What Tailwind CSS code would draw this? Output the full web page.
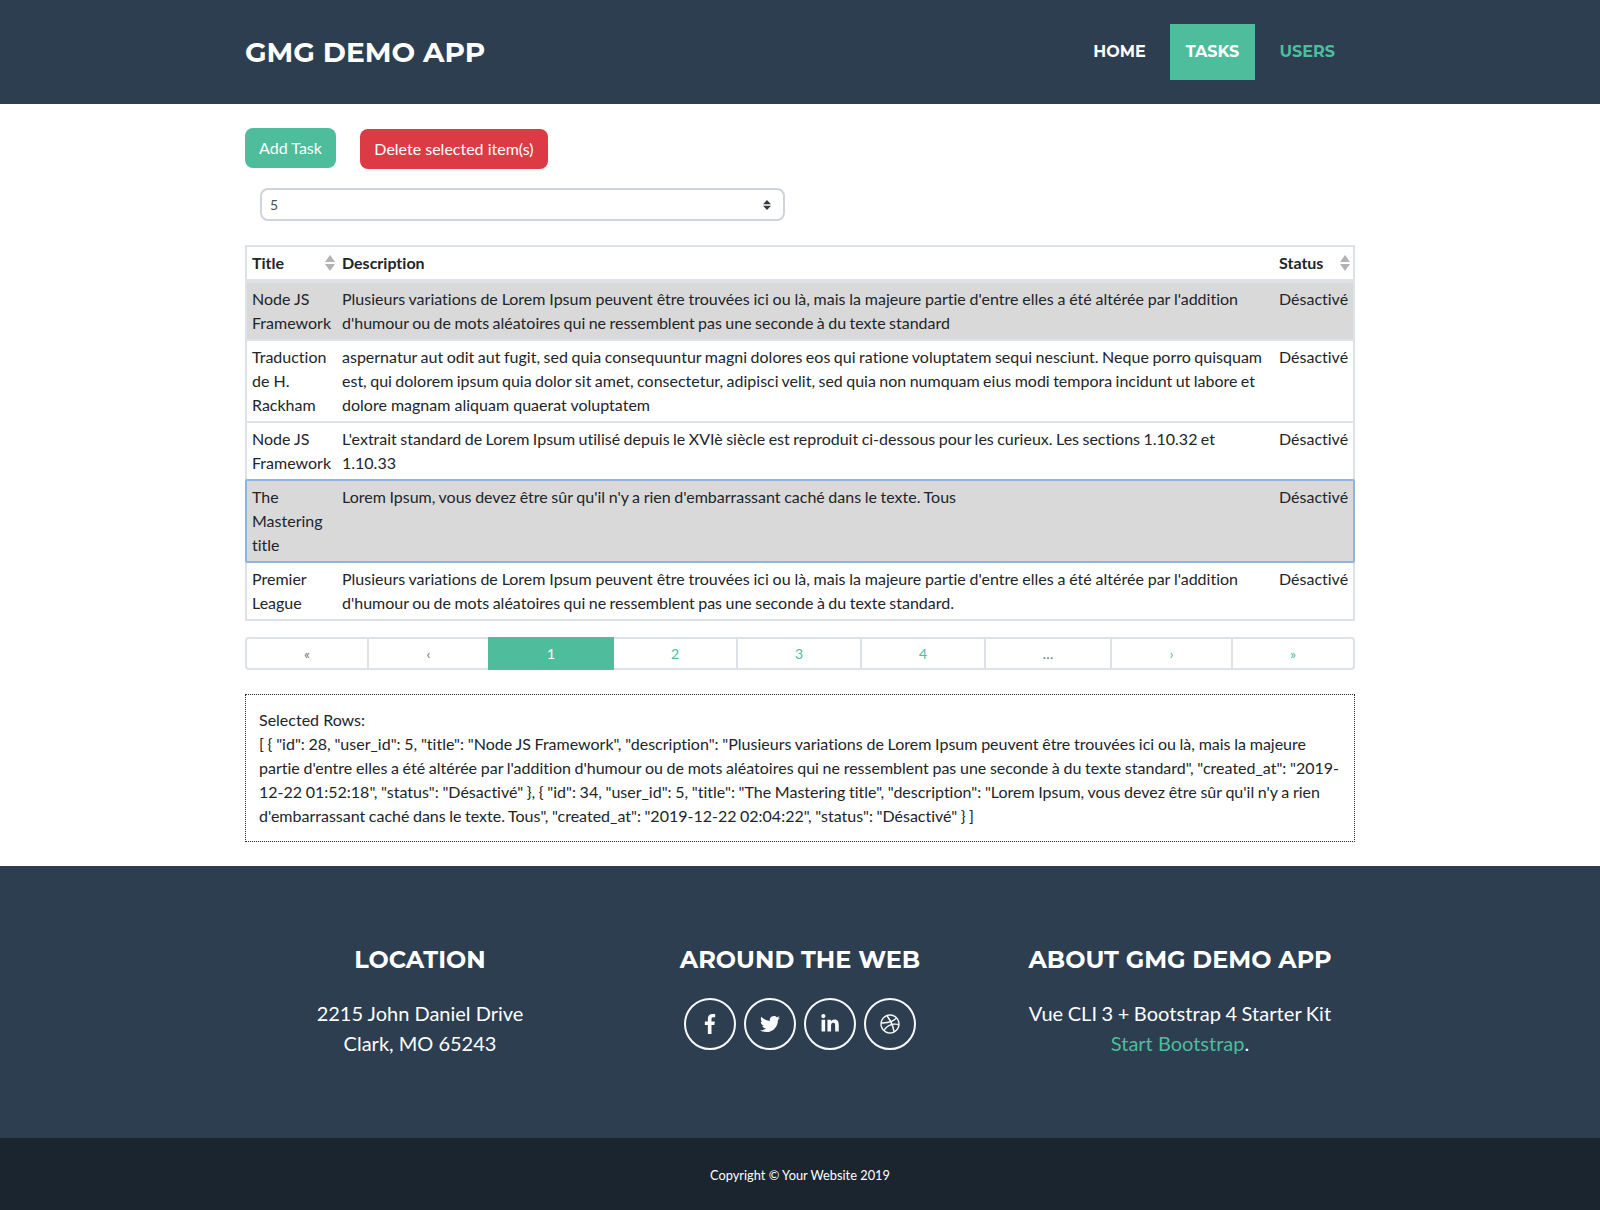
<!DOCTYPE html>
<html lang="fr">
<head>
<meta charset="utf-8">
<title>GMG Demo App</title>
<script src="https://cdn.jsdelivr.net/npm/@tailwindcss/browser@4"></script>
</head>
<body class="bg-white text-[#212529] text-base leading-6 font-[Lato,sans-serif] [font-variant-ligatures:none]">
<header class="h-[104px] bg-[#2c3e50]">
  <div class="w-[1110px] mx-auto h-full flex items-center justify-between text-white font-[Montserrat,Inter,sans-serif] font-bold">
    <a class="text-[28px] whitespace-nowrap">GMG DEMO APP</a>
    <nav class="flex items-center gap-2 text-base whitespace-nowrap">
      <a class="h-14 w-[85px] pb-1 pt-[3px] flex items-center justify-center">HOME</a>
      <a class="h-14 w-[85px] pb-1 pt-[3px] flex items-center justify-center bg-[#4dbd9c]">TASKS</a>
      <a class="h-14 w-[92px] pb-1 pt-[3px] pl-[16.500px] flex items-center text-[#4dbd9c]">USERS</a>
    </nav>
  </div>
</header>

<main class="w-[1110px] mx-auto h-[762px] pt-6">
  <div class="flex gap-6 text-white">
    <button class="w-[91px] h-10 rounded-lg bg-[#4dbd9c]">Add Task</button>
    <button class="w-[188px] h-10 mt-px rounded-lg bg-[#dc3a45]">Delete selected item(s)</button>
  </div>
  <div class="ml-[15px] mt-[19px] w-[525px] h-[33px] border-2 border-[#ced4da] rounded-lg flex items-center justify-between pl-2 pr-3 text-sm text-[#495057]">
    <span>5</span>
    <svg class="w-2 h-[10px]" viewBox="0 0 8 10"><path fill="#343a40" d="M4 0 0 4.200h8zM4 10 0 5.800h8z"/></svg>
  </div>

  <section class="mt-6 border-2 border-[#dee2e6]">
    <div class="h-9 border-b-4 border-[#dee2e6] grid grid-cols-[90px_937px_1fr] pl-[5px] pt-1 font-bold">
      <div class="flex justify-between pr-[7px]">Title<svg class="w-[10px] h-4 mt-1" viewBox="0 0 10 16"><path fill="#b2b2b2" d="M5 0 0 7h10zM5 16 0 9h10z"/></svg></div>
      <div>Description</div>
      <div class="flex justify-between pr-[3px]">Status<svg class="w-[10px] h-4 mt-1" viewBox="0 0 10 16"><path fill="#b2b2b2" d="M5 0 0 7h10zM5 16 0 9h10z"/></svg></div>
    </div>
    <div class="h-[58px] border-b-2 border-[#dee2e6] bg-[#d9d9d9] grid grid-cols-[90px_937px_1fr] pl-[5px] pt-1">
      <div>Node JS<br>Framework</div>
      <div class="whitespace-nowrap [word-spacing:-2px] [text-align-last:justify]">
        <p class="w-[896px]">Plusieurs variations de Lorem Ipsum peuvent être trouvées ici ou là, mais la majeure partie d'entre elles a été altérée par l'addition</p>
        <p class="w-[608px]">d'humour ou de mots aléatoires qui ne ressemblent pas une seconde à du texte standard</p>
      </div>
      <div>Désactivé</div>
    </div>
    <div class="h-[82px] border-b-2 border-[#dee2e6] grid grid-cols-[90px_937px_1fr] pl-[5px] pt-1">
      <div>Traduction<br>de H.<br>Rackham</div>
      <div class="whitespace-nowrap [word-spacing:-2px] [text-align-last:justify]">
        <p class="w-[920px]">aspernatur aut odit aut fugit, sed quia consequuntur magni dolores eos qui ratione voluptatem sequi nesciunt. Neque porro quisquam</p>
        <p class="w-[913px]">est, qui dolorem ipsum quia dolor sit amet, consectetur, adipisci velit, sed quia non numquam eius modi tempora incidunt ut labore et</p>
        <p class="w-[308px]">dolore magnam aliquam quaerat voluptatem</p>
      </div>
      <div>Désactivé</div>
    </div>
    <div class="h-14 grid grid-cols-[90px_937px_1fr] pl-[5px] pt-1">
      <div>Node JS<br>Framework</div>
      <div class="whitespace-nowrap">
        <p class="w-[873px] [word-spacing:-2px] [text-align-last:justify]">L'extrait standard de Lorem Ipsum utilisé depuis le XVIè siècle est reproduit ci-dessous pour les curieux. Les sections 1.10.32 et</p>
        <p>1.10.33</p>
      </div>
      <div>Désactivé</div>
    </div>
    <div class="h-[84px] -mx-0.5 relative border-2 border-[#8eb4e3] rounded-[2px] bg-[#d9d9d9] grid grid-cols-[90px_937px_1fr] pl-[5px] pt-1">
      <div>The<br>Mastering<br>title</div>
      <div class="whitespace-nowrap [word-spacing:-2px] [text-align-last:justify]">
        <p class="w-[614px]">Lorem Ipsum, vous devez être sûr qu'il n'y a rien d'embarrassant caché dans le texte. Tous</p>
      </div>
      <div>Désactivé</div>
    </div>
    <div class="h-14 grid grid-cols-[90px_937px_1fr] pl-[5px] pt-1">
      <div>Premier<br>League</div>
      <div class="whitespace-nowrap [word-spacing:-2px] [text-align-last:justify]">
        <p class="w-[896px]">Plusieurs variations de Lorem Ipsum peuvent être trouvées ici ou là, mais la majeure partie d'entre elles a été altérée par l'addition</p>
        <p class="w-[612px]">d'humour ou de mots aléatoires qui ne ressemblent pas une seconde à du texte standard.</p>
      </div>
      <div>Désactivé</div>
    </div>
  </section>

  <nav class="mt-4 h-[33px] flex text-sm text-center leading-[29px] text-[#4dbd9c]">
    <span class="w-[124px] border-2 border-[#dee2e6] rounded-l-[4px] text-[#6c757d]">«</span>
    <span class="w-[119px] border-y-2 border-[#dee2e6] text-[#6c757d]">‹</span>
    <span class="w-[126px] border-y-2 border-[#4dbd9c] bg-[#4dbd9c] text-white">1</span>
    <span class="w-[124px] border-y-2 border-r-2 border-[#dee2e6]">2</span>
    <span class="w-[124px] border-y-2 border-r-2 border-[#dee2e6]">3</span>
    <span class="w-[124px] border-y-2 border-r-2 border-[#dee2e6]">4</span>
    <span class="w-[126px] border-y-2 border-r-2 border-[#dee2e6] text-[#6c757d]">…</span>
    <span class="w-[121px] border-y-2 border-r-2 border-[#dee2e6]">›</span>
    <span class="w-[122px] border-y-2 border-r-2 border-[#dee2e6] rounded-r-[4px]">»</span>
  </nav>

  <section class="mt-6 h-[148px] border border-dotted border-[#212529] pl-[13px] pt-[13px] whitespace-nowrap">
    <p>Selected Rows:</p>
    <div class="[word-spacing:-2px] [text-align-last:justify]">
      <p class="w-[1047px]">[ { "id": 28, "user_id": 5, "title": "Node JS Framework", "description": "Plusieurs variations de Lorem Ipsum peuvent être trouvées ici ou là, mais la majeure</p>
      <p class="w-[1080px]">partie d'entre elles a été altérée par l'addition d'humour ou de mots aléatoires qui ne ressemblent pas une seconde à du texte standard", "created_at": "2019-</p>
      <p class="w-[1061px]">12-22 01:52:18", "status": "Désactivé" }, { "id": 34, "user_id": 5, "title": "The Mastering title", "description": "Lorem Ipsum, vous devez être sûr qu'il n'y a rien</p>
      <p class="w-[715px]">d'embarrassant caché dans le texte. Tous", "created_at": "2019-12-22 02:04:22", "status": "Désactivé" } ]</p>
    </div>
  </section>
</main>

<footer>
  <div class="h-[272px] bg-[#2c3e50] text-white">
    <div class="w-[1140px] mx-auto pt-20 grid grid-cols-3 text-center text-xl leading-[30px] whitespace-nowrap">
      <div>
        <h4 class="font-[Montserrat,Inter,sans-serif] font-bold text-2xl leading-7 mb-6">LOCATION</h4>
        <p>2215 John Daniel Drive<br>Clark, MO 65243</p>
      </div>
      <div>
        <h4 class="font-[Montserrat,Inter,sans-serif] font-bold text-2xl leading-7 mb-6">AROUND THE WEB</h4>
        <div class="flex justify-center gap-2">
          <a class="w-[52px] h-[52px] rounded-full border-2 border-[#f8f9fa] flex items-center justify-center"><svg class="h-5 w-5" viewBox="-124 0 512 512"><path fill="#f8f9fa" d="M76.7 512V283H0v-91h76.7v-71.7C76.7 42.4 124.3 0 193.8 0c33.3 0 61.9 2.5 70.2 3.6V85h-48.200c-37.800 0-45.100 18-45.100 44.300V192H256l-11.700 91h-73.600v229"/></svg></a>
          <a class="w-[52px] h-[52px] rounded-full border-2 border-[#f8f9fa] flex items-center justify-center"><svg class="h-5 w-5" viewBox="0 0 512 512"><path fill="#f8f9fa" d="M459.37 151.716c.325 4.548.325 9.097.325 13.645 0 138.72-105.583 298.558-298.558 298.558-59.452 0-114.680-17.219-161.137-47.106 8.447.974 16.568 1.299 25.340 1.299 49.055 0 94.213-16.568 130.274-44.832-46.132-.975-84.792-31.188-98.112-72.772 6.498.974 12.995 1.624 19.818 1.624 9.421 0 18.843-1.300 27.614-3.573-48.081-9.747-84.143-51.980-84.143-102.985v-1.299c13.969 7.797 30.214 12.670 47.431 13.319-28.264-18.843-46.781-51.005-46.781-87.391 0-19.492 5.197-37.360 14.294-52.954 51.655 63.675 129.300 105.258 216.365 109.807-1.624-7.797-2.599-15.918-2.599-24.040 0-57.828 46.782-104.934 104.934-104.934 30.213 0 57.502 12.670 76.670 33.137 23.715-4.548 46.456-13.320 66.599-25.340-7.798 24.366-24.366 44.833-46.132 57.827 21.117-2.273 41.584-8.122 60.426-16.243-14.292 20.791-32.161 39.308-52.628 54.253z"/></svg></a>
          <a class="w-[52px] h-[52px] rounded-full border-2 border-[#f8f9fa] flex items-center justify-center"><svg class="h-5 w-[18px]" viewBox="0 0 448 512"><path fill="#f8f9fa" d="M100.280 448H7.400V148.900h92.880zM53.790 108.100C24.090 108.100 0 83.500 0 53.800a53.790 53.790 0 0 1 107.580 0c0 29.700-24.100 54.300-53.790 54.300zM447.900 448h-92.680V302.400c0-34.700-.7-79.200-48.290-79.200-48.290 0-55.690 37.700-55.690 76.700V448h-92.780V148.900h89.080v40.800h1.300c12.400-23.500 42.690-48.300 87.880-48.300 94 0 111.280 61.900 111.280 142.300V448z"/></svg></a>
          <a class="w-[52px] h-[52px] rounded-full border-2 border-[#f8f9fa] flex items-center justify-center"><svg class="h-5 w-5" viewBox="0 0 512 512"><path fill="#f8f9fa" d="M256 8C119.252 8 8 119.252 8 256s111.252 248 248 248 248-111.252 248-248S392.748 8 256 8zm163.970 114.366c29.503 36.046 47.369 81.957 47.835 131.955-6.984-1.477-77.018-15.682-147.502-6.818-5.752-14.041-11.181-26.393-18.617-41.614 78.321-31.977 113.818-77.482 118.284-83.523zM396.421 97.870c-3.810 5.427-35.697 48.286-111.021 76.519-34.712-63.776-73.185-116.168-79.040-124.008 67.176-16.193 137.966 1.270 190.061 47.489zm-230.480-33.250c5.585 7.659 43.438 60.116 78.537 122.509-99.087 26.313-186.360 25.934-195.834 25.809C62.380 147.205 106.678 92.573 165.941 64.620zM44.170 256.323c0-2.166.043-4.322.108-6.473 9.268.190 111.920 1.513 217.706-30.146 6.064 11.868 11.857 23.915 17.174 35.949-76.599 21.575-146.194 83.527-180.531 142.306C64.794 360.405 44.170 310.730 44.170 256.323zm81.807 167.113c22.127-45.233 82.178-103.622 167.579-132.756 29.740 77.283 42.039 142.053 45.189 160.638-68.112 29.013-150.015 21.053-212.768-27.882zm248.380 8.489c-2.171-12.886-13.446-74.897-41.152-151.033 66.380-10.626 124.700 6.768 131.947 9.055-9.442 58.941-43.273 109.844-90.795 141.978z"/></svg></a>
        </div>
      </div>
      <div>
        <h4 class="font-[Montserrat,Inter,sans-serif] font-bold text-2xl leading-7 mb-6">ABOUT GMG DEMO APP</h4>
        <p><span class="[word-spacing:-0.700px] tracking-[0.06px]">Vue CLI 3 + Bootstrap 4 Starter Kit</span><br><a class="text-[#4dbd9c]">Start Bootstrap</a>.</p>
      </div>
    </div>
  </div>
  <div class="h-[72px] bg-[#1a252f] text-white text-[12.8px] text-center pt-[25px]">Copyright © Your Website 2019</div>
</footer>
</body>
</html>
